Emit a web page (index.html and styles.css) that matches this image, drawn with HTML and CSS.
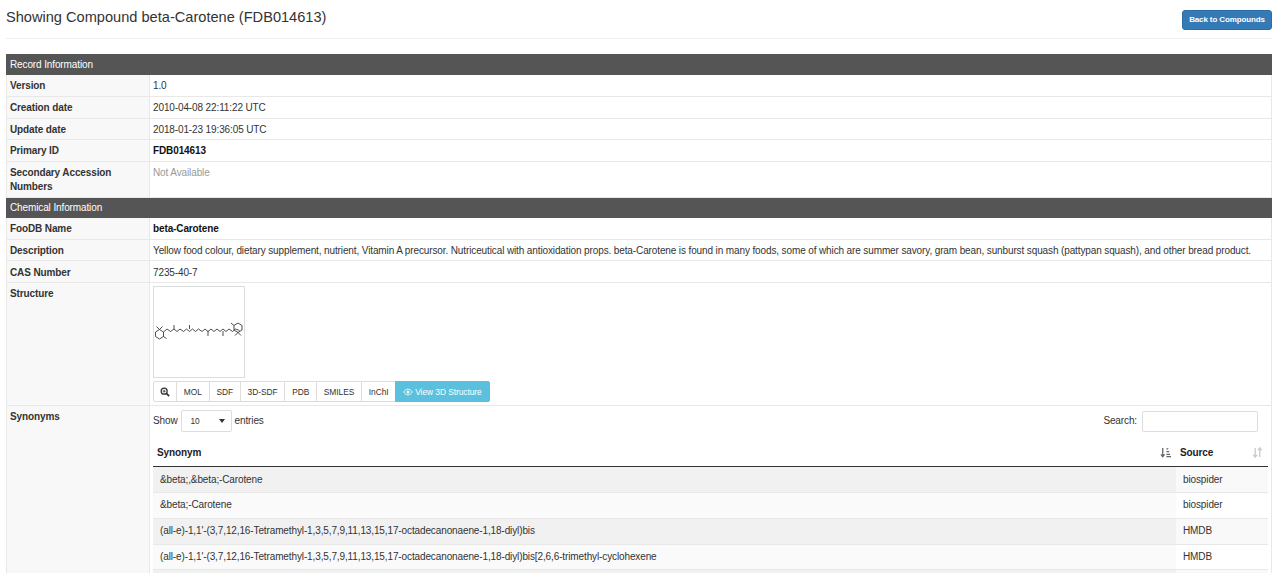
FILE: index.html
```html
<!DOCTYPE html>
<html lang="en">
<head>
<meta charset="utf-8">
<title>Showing Compound beta-Carotene (FDB014613)</title>
<link rel="stylesheet" href="styles.css">
</head>
<body>
<div class="page">
  <header class="page-header">
    <h1>Showing Compound beta-Carotene (FDB014613)</h1>
    <a class="btn-back" href="#">Back to Compounds</a>
  </header>
  <table class="details">
    <colgroup><col class="col-label"><col></colgroup>
    <tbody>
      <tr class="section"><td colspan="2">Record Information</td></tr>
      <tr><th>Version</th><td>1.0</td></tr>
      <tr><th>Creation date</th><td>2010-04-08 22:11:22 UTC</td></tr>
      <tr><th>Update date</th><td>2018-01-23 19:36:05 UTC</td></tr>
      <tr><th>Primary ID</th><td><strong>FDB014613</strong></td></tr>
      <tr class="tall"><th>Secondary Accession Numbers</th><td><span class="muted">Not Available</span></td></tr>
      <tr class="section"><td colspan="2">Chemical Information</td></tr>
      <tr><th>FooDB Name</th><td><strong>beta-Carotene</strong></td></tr>
      <tr><th>Description</th><td>Yellow food colour, dietary supplement, nutrient, Vitamin A precursor. Nutriceutical with antioxidation props. beta-Carotene is found in many foods, some of which are summer savory, gram bean, sunburst squash (pattypan squash), and other bread product.</td></tr>
      <tr><th>CAS Number</th><td>7235-40-7</td></tr>
      <tr><th>Structure</th><td class="structure">
        <div class="thumb">
          <svg viewBox="0 0 90 90" width="90" height="90" fill="none" stroke="#222" stroke-width=".8">
            <path d="M1.500 45l4-2.500 4 2.500v4.500l-4 2.500-4-2.500z"/>
            <path d="M5.500 42.500l-3-3M5.500 42.500l3-3M9.500 49.500l3 2"/>
            <path d="M9.500 45l3.500-3 3.500 2.500 3.500-2.500 3 2.500 3-2.500 3.500 2.500 3-2.500 3 2.500 3-2.500 3 2.500 3-2.500 3.500 2.500 3-2.500 3 2.500 3-2.500 3 2.500 3-2.500 3 2.500 3-2.500 3 2.500 3-2.500 3.500 2.500 3-2.500 4 1.500"/>
            <path d="M20 42v-4M35.500 42v-4M54 44v5M69 44v5"/>
            <path d="M80 43l4 2.500 4-2.500v-4.500l-4-2.500-4 2.500z"/>
            <path d="M80 38.500l-3-2.500M84 45.500l-3 3M84 45.500l3 3"/>
          </svg>
        </div>
        <div class="btn-group">
          <a href="#" class="tool tool-zoom" aria-label="Zoom">
            <svg viewBox="0 0 12 12" width="10" height="10" fill="none" stroke="#333"><circle cx="5" cy="5" r="3.600" stroke-width="1.500"/><path d="M7.700 7.700L11 11" stroke-width="2"/><path d="M3.200 5h3.600M5 3.200v3.600" stroke-width="1"/></svg>
          </a>
          <a href="#" class="tool">MOL</a>
          <a href="#" class="tool">SDF</a>
          <a href="#" class="tool">3D-SDF</a>
          <a href="#" class="tool">PDB</a>
          <a href="#" class="tool">SMILES</a>
          <a href="#" class="tool">InChI</a>
          <a href="#" class="tool tool-info">
            <svg viewBox="0 0 14 10" width="10" height="8" fill="none" stroke="#fff"><path d="M1 5c1.500-2.500 3.500-4 6-4s4.500 1.500 6 4c-1.500 2.500-3.500 4-6 4s-4.500-1.500-6-4z" stroke-width="1.200"/><circle cx="7" cy="5" r="2.200" fill="#fff" stroke="none"/></svg>
            View 3D Structure
          </a>
        </div>
      </td></tr>
      <tr><th>Synonyms</th><td class="synonyms">
        <div class="dt-controls">
          <label class="dt-length">Show <span class="select">10<span class="caret"></span></span> entries</label>
          <label class="dt-search">Search: <input type="text" aria-label="Search"></label>
        </div>
        <table class="dt">
          <thead>
            <tr>
              <th><span class="dt-head">Synonym
                <svg viewBox="0 0 12 12" width="11" height="11" fill="none" stroke="#666"><path d="M3 1v9.500M1 8l2 2.500L5 8" stroke-width="1.400"/><path d="M7 2h2M7 5h3M7 8h4M7 10.500h5" stroke-width="1.200"/></svg>
              </span></th>
              <th class="col-source"><span class="dt-head">Source
                <svg viewBox="0 0 12 12" width="11" height="11" fill="none" stroke="#ccc" stroke-width="1.500"><path d="M3.500 1v10M1.500 8.500l2 2.500 2-2.500M8.500 11V1M6.500 3.500l2-2.500 2 2.500"/></svg>
              </span></th>
            </tr>
          </thead>
          <tbody>
            <tr><td>&amp;beta;,&amp;beta;-Carotene</td><td>biospider</td></tr>
            <tr><td>&amp;beta;-Carotene</td><td>biospider</td></tr>
            <tr><td>(all-e)-1,1'-(3,7,12,16-Tetramethyl-1,3,5,7,9,11,13,15,17-octadecanonaene-1,18-diyl)bis</td><td>HMDB</td></tr>
            <tr><td>(all-e)-1,1'-(3,7,12,16-Tetramethyl-1,3,5,7,9,11,13,15,17-octadecanonaene-1,18-diyl)bis[2,6,6-trimethyl-cyclohexene</td><td>HMDB</td></tr>
            <tr><td></td><td></td></tr>
          </tbody>
        </table>
      </td></tr>
    </tbody>
  </table>
</div>
</body>
</html>
```
FILE: styles.css
```css
html, body { margin: 0; padding: 0; height: 573px; overflow: hidden; background: #fff; }
body { font-family: "Liberation Sans", Arial, sans-serif; font-size: 10px; letter-spacing: -.12px; line-height: 14px; color: #333; }
a { text-decoration: none; color: inherit; }
.page { padding: 0 8px 0 6px; }
.page-header { display: flex; justify-content: space-between; align-items: flex-start; height: 38px; border-bottom: 1px solid #eee; margin-bottom: 15px; }
.page-header h1 { margin: 9px 0 0; font-size: 14.6px; letter-spacing: 0; line-height: 17px; font-weight: 400; color: #333; }
.btn-back { margin-top: 10px; width: 90px; height: 20px; box-sizing: border-box; border: 1px solid #2e6da4; border-radius: 3px; background: #337ab7; color: #fff; font-size: 8px; letter-spacing: -.12px; line-height: 18px; text-align: center; font-weight: 700; }
.details { width: 100%; border-collapse: collapse; table-layout: fixed; }
.col-label { width: 143px; }
.details > tbody > tr > th, .details > tbody > tr > td { border: 1px solid #e8e8e8; padding: 4.100px 3px 2.700px; text-align: left; vertical-align: top; height: 14px; }
.details > tbody > tr > th { background: #f8f8f8; font-weight: 700; padding-right: 20px; }
.details > tbody > tr.section > td { background: #555; color: #fff; height: 14px; border: 1px solid #555; padding: 3px 3px 2px; }
.details > tbody > tr.tall > th, .details > tbody > tr.tall > td { height: 28px; }
.muted { color: #999; }
strong { font-weight: 700; color: #111; }
.details > tbody > tr > td.structure { padding-top: 3px; }
.thumb { width: 90px; height: 90px; border: 1px solid #ddd; margin-bottom: 3px; background: #fff; }
.thumb svg { display: block; }
.btn-group { display: flex; height: 21px; }
.tool { display: flex; align-items: center; gap: 2px; height: 21px; box-sizing: border-box; padding: 0 6.800px; border: 1px solid #ddd; margin-left: -1px; font-size: 8.4px; letter-spacing: -.05px; background: #fff; color: #333; }
.tool-zoom { padding: 0 6px; }
.tool:first-child { margin-left: 0; border-radius: 2px 0 0 2px; }
.tool-info { background: #5bc0de; border-color: #5bc0de; color: #fff; border-radius: 0 2px 2px 0; }
.details > tbody > tr > td.synonyms { padding-top: 4px; padding-bottom: 0; }
.dt-controls { display: flex; justify-content: space-between; align-items: center; height: 23px; padding-right: 10px; margin-bottom: 9.500px; }
.dt-length, .dt-search { display: flex; align-items: center; gap: 3px; color: #333; }
.select { display: flex; align-items: center; justify-content: space-between; width: 51px; height: 22px; box-sizing: border-box; border: 1px solid #ddd; border-radius: 2px; padding: 0 3px 0 9px; font-size: 8.3px; }
.caret { border-left: 3px solid transparent; border-right: 3px solid transparent; border-top: 4px solid #333; margin-right: 3px; }
.dt-search input { width: 116px; height: 21px; box-sizing: border-box; border: 1px solid #ddd; border-radius: 2px; margin: 0 0 0 2px; padding: 0; background: #fff; }
.dt { width: 1115px; border-collapse: collapse; table-layout: fixed; }
.dt th { height: 21px; padding: 0 5px 3px 4px; font-weight: 700; text-align: left; border-bottom: 1px solid #333; color: #222; }
.dt-head { display: flex; justify-content: space-between; align-items: center; }
.col-source { width: 83px; }
.dt td { height: 24.700px; padding: 0 7px; border-top: 1px solid #e8e8e8; vertical-align: middle; background: #fff; }
.dt tbody tr:nth-child(odd) td:first-child { background: #f1f1f1; }
.dt tbody tr:nth-child(even) td:first-child { background: #fafafa; }
.dt tbody tr:nth-child(odd) td:last-child { background: #f9f9f9; }
```
